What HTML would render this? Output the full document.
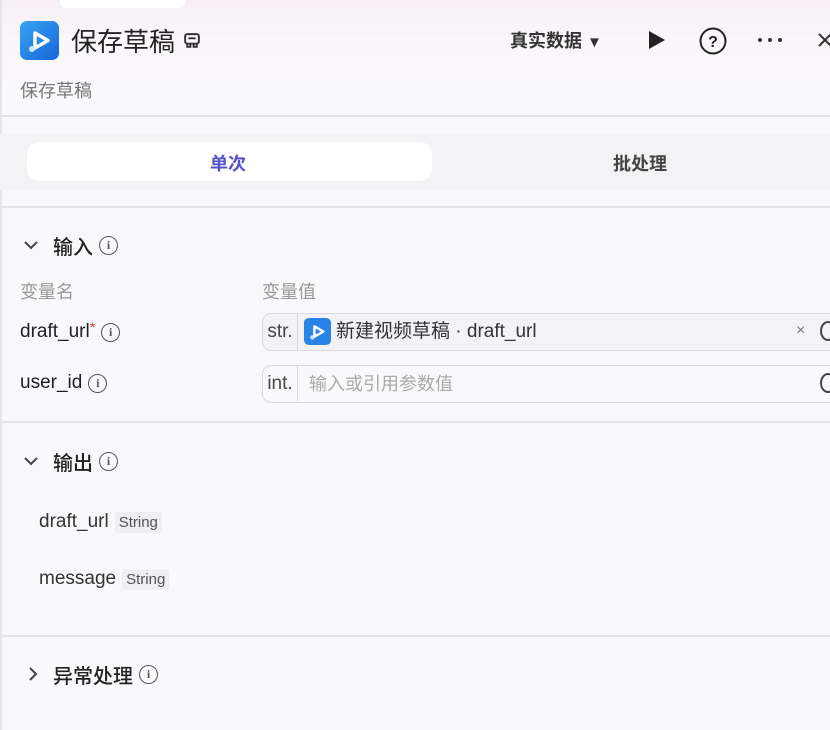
<!DOCTYPE html>
<html><head><meta charset="utf-8"><style>
*{margin:0;padding:0;box-sizing:border-box}
body{width:830px;height:730px;overflow:hidden;background:#f9f9fc;font-family:"Liberation Sans","Noto Sans CJK SC",sans-serif;color:#1d1d24;position:relative}
.a{position:absolute;white-space:nowrap}
.f{display:flex;align-items:center;height:26px}
.hd{position:absolute;left:0;top:0;width:830px;height:116px;background:linear-gradient(180deg,#f9eef6 0%,#faf7fb 40%,#fafafc 100%)}
.ln{position:absolute;left:0;width:830px;height:2px;background:#e2e2e8}
.info{display:inline-block;flex:none;width:19px;height:19px;border:1.5px solid #555;border-radius:50%;font:bold 12px/16px "Liberation Serif",serif;text-align:center;color:#555;margin-left:6px}
.tag{background:#eeeef3;color:#555;font-size:15px;padding:2px 4px;border-radius:3px;margin-left:6px}
.box{position:absolute;left:262px;width:600px;border:1px solid #d8d8e0;border-radius:9px;background:#f3f3f7;height:38px}
.h{font-size:20px;font-weight:500;color:#222}
</style></head><body>
<div class="hd"></div>
<div class="a" style="left:60px;top:-8px;width:125px;height:16px;background:#fff;border-radius:6px"></div>
<div class="a" style="left:0;top:0;width:2px;height:730px;background:#e6e6ea"></div>
<svg class="a" style="left:20px;top:21px" width="39" height="39" viewBox="0 0 39 39"><defs><linearGradient id="g" x1="0" y1="0" x2="1" y2="1"><stop offset="0" stop-color="#39a3f5"/><stop offset="1" stop-color="#1667d8"/></linearGradient></defs><rect width="39" height="39" rx="7" fill="url(#g)"/><path d="M15 12 L28 19.5 L15 27 Z" fill="none" stroke="#fff" stroke-width="3.5" stroke-linejoin="round"/><circle cx="12" cy="28" r="3" fill="#cfe6ff"/></svg>
<div class="a" style="left:71px;top:25px;font-size:26px;line-height:34px;color:#222">保存草稿</div>
<svg class="a" style="left:183px;top:32px" width="18" height="18" viewBox="0 0 17 17" fill="none" stroke="#333" stroke-width="1.8"><rect x="2" y="2" width="13" height="9" rx="2"/><path d="M4 11v3h3v-3M10 11v3h3v-3M5 6h7"/></svg>
<div class="a" style="left:20px;top:77px;font-size:18px;color:#777">保存草稿</div>
<div class="a" style="left:510px;top:29px;font-size:18px;line-height:24px;color:#333;font-weight:bold">真实数据 <span style="font-size:15px">▼</span></div>
<svg class="a" style="left:647px;top:30px" width="20" height="20"><path d="M2 1 L18 10 L2 19Z" fill="#222"/></svg>
<svg class="a" style="left:698px;top:26px" width="30" height="30" viewBox="0 0 30 30"><circle cx="15" cy="15" r="12.5" fill="none" stroke="#222" stroke-width="2"/><text x="15" y="21" text-anchor="middle" font-family="Liberation Sans" font-weight="bold" font-size="16" fill="#222">?</text></svg>
<svg class="a" style="left:756px;top:37px" width="28" height="6"><circle cx="4" cy="3" r="2" fill="#333"/><circle cx="14" cy="3" r="2" fill="#333"/><circle cx="24" cy="3" r="2" fill="#333"/></svg>
<svg class="a" style="left:817px;top:32px" width="16" height="16"><path d="M2 2L14 14M14 2L2 14" stroke="#333" stroke-width="2"/></svg>
<div class="ln" style="top:115px"></div>
<div class="a" style="left:0;top:134px;width:830px;height:56px;background:#f3f3f6"></div>
<div class="a" style="left:27px;top:142px;width:405px;height:39px;background:#fff;border-radius:12px"></div>
<div class="a" style="left:210px;top:150px;font-size:18px;color:#5551c8;font-weight:bold">单次</div>
<div class="a" style="left:613px;top:150px;font-size:18px;color:#444;font-weight:bold">批处理</div>
<div class="ln" style="top:206px"></div>
<svg class="a" style="left:24px;top:240px" width="14" height="10"><path d="M1 2L7 8L13 2" fill="none" stroke="#444" stroke-width="2"/></svg>
<div class="a h f" style="left:53px;top:232px">输入<span class="info">i</span></div>
<div class="a" style="left:20px;top:278px;font-size:18px;color:#999">变量名</div>
<div class="a" style="left:262px;top:278px;font-size:18px;color:#999">变量值</div>
<div class="a f" style="left:20px;top:319px;font-size:19px">draft_url<span style="color:#e33;font-size:14px;align-self:flex-start">*</span><span class="info">i</span></div>
<div class="a f" style="left:20px;top:370px;font-size:19px">user_id<span class="info">i</span></div>
<div class="box" style="top:313px"></div>
<div class="a" style="left:263px;top:314px;width:35px;height:36px;border-right:1px solid #d8d8e0;font-size:19px;line-height:36px;text-align:center;color:#444">str.</div>
<svg class="a" style="left:304px;top:318px" width="27" height="27" viewBox="0 0 39 39"><rect width="39" height="39" rx="7" fill="#2a84e8"/><path d="M15 12 L28 19.5 L15 27 Z" fill="none" stroke="#fff" stroke-width="3.5" stroke-linejoin="round"/><circle cx="12" cy="28" r="3" fill="#cfe6ff"/></svg>
<div class="a" style="left:336px;top:320px;font-size:19px;line-height:24px;color:#333">新建视频草稿 · draft_url</div>
<div class="a" style="left:796px;top:322px;font-size:16px;color:#777">×</div>
<div class="a" style="left:820px;top:321px;width:16px;height:20px;border:2px solid #444;border-radius:50%"></div>
<div class="box" style="top:365px;background:#f9f9fc"></div>
<div class="a" style="left:263px;top:366px;width:35px;height:35px;border-right:1px solid #d8d8e0;font-size:19px;line-height:35px;text-align:center;color:#444">int.</div>
<div class="a" style="left:309px;top:372px;font-size:18px;line-height:24px;color:#aaa">输入或引用参数值</div>
<div class="a" style="left:820px;top:373px;width:16px;height:20px;border:2px solid #444;border-radius:50%"></div>
<div class="ln" style="top:421px"></div>
<svg class="a" style="left:24px;top:456px" width="14" height="10"><path d="M1 2L7 8L13 2" fill="none" stroke="#444" stroke-width="2"/></svg>
<div class="a h f" style="left:53px;top:448px">输出<span class="info">i</span></div>
<div class="a f" style="left:39px;top:509px;font-size:19px;color:#333">draft_url<span class="tag">String</span></div>
<div class="a f" style="left:39px;top:566px;font-size:19px;color:#333">message<span class="tag">String</span></div>
<div class="ln" style="top:635px"></div>
<svg class="a" style="left:28px;top:667px" width="10" height="14"><path d="M2 1L8 7L2 13" fill="none" stroke="#444" stroke-width="2"/></svg>
<div class="a h f" style="left:53px;top:661px">异常处理<span class="info">i</span></div>
</body></html>
